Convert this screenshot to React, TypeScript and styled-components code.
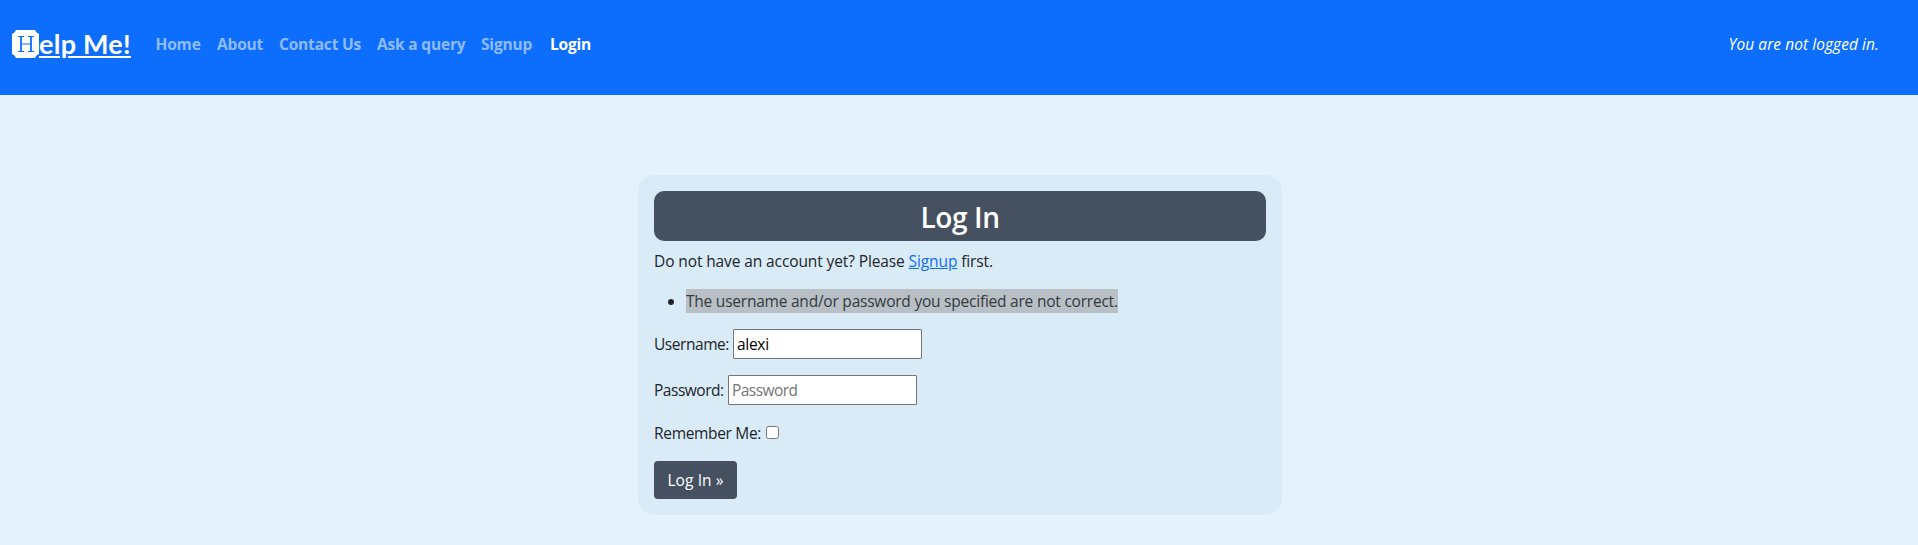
import React from "react";
import styled, { createGlobalStyle } from "styled-components";

const GlobalStyle = createGlobalStyle`
  *, *::before, *::after { box-sizing: border-box; }
  body {
    margin: 0;
    min-height: 545px;
    background: #e3f2fd;
    color: #212529;
    font-family: "Segoe UI", "Open Sans", "Noto Sans", sans-serif;
    font-size: 15.5px;
    line-height: 24px;
  }
`;

const Navbar = styled.header`
  display: flex;
  align-items: flex-start;
  height: 95px;
  padding: 24px 39px 0 12px;
  background: #0d6efd;
  color: #fff;
`;

const Brand = styled.a`
  display: flex;
  width: 143.5px;
  padding-top: 6px;
  color: #fff;
  text-decoration: none;
`;

const BrandMark = styled.svg`
  display: block;
  flex: none;
  width: 27px;
  height: 28px;
`;

const BrandText = styled.span`
  height: 28px;
  font: 700 27px/27.5px Lato, sans-serif;
  letter-spacing: 0.25px;
  text-decoration: underline;
  text-decoration-thickness: 2px;
  text-underline-offset: 2px;
  white-space: nowrap;
`;

const NavLinks = styled.nav`
  display: flex;
  height: 40px;
  align-items: center;
`;

const NavLink = styled.a<{ $width: number; $active?: boolean }>`
  width: ${(p) => p.$width}px;
  color: ${(p) => (p.$active ? "#fff" : "rgba(255, 255, 255, 0.55)")};
  font-weight: 700;
  letter-spacing: -0.18px;
  text-decoration: none;
  white-space: nowrap;
`;

const Status = styled.em`
  margin-left: auto;
  line-height: 40px;
  letter-spacing: 0.06px;
`;

const Card = styled.main`
  width: 644px;
  height: 340px;
  margin: 80px auto 0 638px;
  padding: 16px;
  border-radius: 16px;
  background: #d9ebf7;
`;

const Title = styled.h1`
  height: 50px;
  margin: 0 0 8px;
  border-radius: 10px;
  background: #455160;
  color: #fff;
  font-size: 28px;
  font-weight: 600;
  letter-spacing: -0.4px;
  line-height: 52px;
  text-align: center;
`;

const Intro = styled.p`
  margin: 0 0 16px;
  letter-spacing: -0.11px;
`;

const TextLink = styled.a`
  color: #0d6efd;
  text-decoration: underline;
`;

const ErrorList = styled.ul`
  margin: 0 0 16px;
  padding-left: 32px;
`;

const ErrorText = styled.span`
  display: inline-block;
  width: 432px;
  height: 24px;
  background: #b8bfc5;
  color: #333a40;
  letter-spacing: -0.225px;
  white-space: nowrap;
  vertical-align: top;
`;

const Field = styled.div<{ $height: number }>`
  display: flex;
  align-items: center;
  height: ${(p) => p.$height}px;
  margin-bottom: 16px;
`;

const Label = styled.label<{ $width: number; $spacing: number }>`
  width: ${(p) => p.$width}px;
  letter-spacing: ${(p) => p.$spacing}px;
  white-space: nowrap;
`;

const TextInput = styled.input`
  width: 189px;
  height: 30px;
  padding: 1px 3px;
  border: 1px solid #767676;
  border-radius: 1px;
  background: #fff;
  color: #000;
  font: inherit;
  letter-spacing: -0.3px;
  outline: 0;
  &::placeholder { color: #757575; opacity: 1; letter-spacing: -0.55px; }
`;

const Checkbox = styled.input`
  position: relative;
  top: -0.5px;
  width: 13px;
  height: 13px;
  margin: 0;
`;

const SubmitButton = styled.button`
  display: block;
  width: 83px;
  height: 38px;
  padding: 0;
  border: 0;
  border-radius: 4px;
  background: #455160;
  color: #fff;
  font: inherit;
  letter-spacing: 0.1px;
`;

const links = [
  { label: "Home", width: 61.5 },
  { label: "About", width: 62 },
  { label: "Contact Us", width: 98 },
  { label: "Ask a query", width: 104 },
  { label: "Signup", width: 69 },
  { label: "Login", width: 44, active: true },
];

export default function App() {
  return (
    <>
      <GlobalStyle />
      <Navbar>
        <Brand href="#">
          <BrandMark viewBox="0 0 27 28" aria-hidden="true">
            <path d="M4 0H23L24.5 2.5L27 4V24L24.5 25.5L23 28H4L2.5 25.5L0 24V4L2.5 2.5Z" fill="#fff" />
            <path d="M6 6.5H12M16 6.5H22M6 21.5H12M16 21.5H22M9 14H19" stroke="#0d6efd" strokeWidth="1" />
            <path d="M9 6.5V21.5M19 6.5V21.5" stroke="#0d6efd" strokeWidth="1.8" />
          </BrandMark>
          <BrandText>elp Me!</BrandText>
        </Brand>
        <NavLinks>
          {links.map((l) => (
            <NavLink key={l.label} href="#" $width={l.width} $active={l.active}>
              {l.label}
            </NavLink>
          ))}
        </NavLinks>
        <Status>You are not logged in.</Status>
      </Navbar>
      <Card>
        <Title>Log In</Title>
        <Intro>
          Do not have an account yet? Please <TextLink href="#">Signup</TextLink> first.
        </Intro>
        <ErrorList>
          <li>
            <ErrorText>The username and/or password you specified are not correct.</ErrorText>
          </li>
        </ErrorList>
        <Field $height={30}>
          <Label $width={79} $spacing={-0.45}>Username:</Label>
          <TextInput type="text" defaultValue="alexi" />
        </Field>
        <Field $height={30}>
          <Label $width={74} $spacing={-0.48}>Password:</Label>
          <TextInput type="password" placeholder="Password" />
        </Field>
        <Field $height={24}>
          <Label $width={112} $spacing={-0.32}>Remember Me:</Label>
          <Checkbox type="checkbox" />
        </Field>
        <SubmitButton type="button">Log In »</SubmitButton>
      </Card>
    </>
  );
}
